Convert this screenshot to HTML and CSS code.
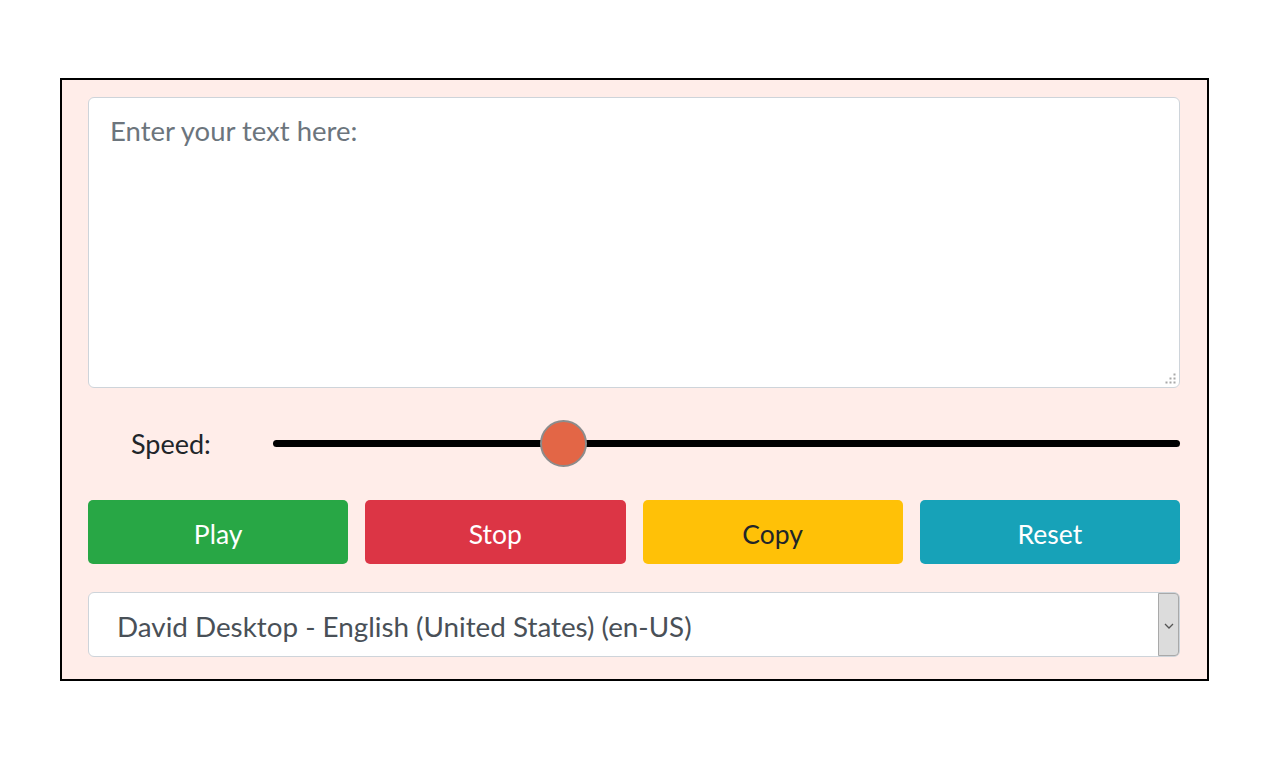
FILE: index.html
```html
<!DOCTYPE html>
<html lang="en">
<head>
<meta charset="utf-8">
<title>Text to Speech</title>
<link rel="stylesheet" href="styles.css">
</head>
<body>
<div class="panel">
  <div class="text-wrap">
    <textarea class="text-input" placeholder="Enter your text here:"></textarea>
    <svg class="grip" width="11" height="11" viewBox="0 0 11 11">
      <g fill="#a8a8a8">
        <rect x="8.5" y="0.5" width="2" height="2"/>
        <rect x="4.5" y="4.5" width="2" height="2"/>
        <rect x="8.5" y="4.5" width="2" height="2"/>
        <rect x="0.5" y="8.5" width="2" height="2"/>
        <rect x="4.5" y="8.5" width="2" height="2"/>
        <rect x="8.5" y="8.5" width="2" height="2"/>
      </g>
    </svg>
  </div>
  <div class="speed-row">
    <label class="speed-label" for="speed">Speed:</label>
    <input class="speed-range" id="speed" type="range" min="0.1" max="3" step="0.1" value="1">
  </div>
  <div class="buttons">
    <button class="btn btn-play">Play</button>
    <button class="btn btn-stop">Stop</button>
    <button class="btn btn-copy">Copy</button>
    <button class="btn btn-reset">Reset</button>
  </div>
  <div class="select-wrap">
    <select class="voice-select">
      <option>David Desktop - English (United States) (en-US)</option>
    </select>
    <span class="select-arrow"><svg width="10" height="6" viewBox="0 0 10 6"><path d="M1 1 L5 5 L9 1" fill="none" stroke="#555" stroke-width="1.3"/></svg></span>
  </div>
</div>
</body>
</html>
```

FILE: styles.css
```css
html, body {
  margin: 0;
  padding: 0;
  background: #ffffff;
}
body {
  font-family: "Lato", "Open Sans", sans-serif;
  color: #212529;
}
.panel {
  box-sizing: border-box;
  width: 1149px;
  margin: 78px 0 0 60px;
  border: 2px solid #000;
  background: #ffede9;
  padding: 17px 27px 22px 26px;
  display: flex;
  flex-direction: column;
}
.text-wrap {
  position: relative;
}
.text-input {
  box-sizing: border-box;
  display: block;
  width: 100%;
  height: 291px;
  border: 1px solid #ced4da;
  border-radius: 6px;
  background: #fff;
  padding: 12px 21px;
  font-family: inherit;
  font-size: 27.5px;
  line-height: 1.5;
  color: #495057;
  resize: none;
  outline: none;
}
.text-input::placeholder {
  color: #6c757d;
  opacity: 1;
}
.grip {
  position: absolute;
  right: 4px;
  bottom: 4px;
}
.speed-row {
  display: flex;
  align-items: center;
  margin-top: 32px;
  height: 47px;
}
.speed-label {
  width: 185px;
  padding-left: 43px;
  box-sizing: border-box;
  font-size: 27px;
  color: #212529;
  flex: none;
}
.speed-range {
  -webkit-appearance: none;
  appearance: none;
  flex: 1;
  margin: 0;
  height: 47px;
  background: transparent;
}
.speed-range::-webkit-slider-runnable-track {
  height: 7px;
  background: #000;
  border-radius: 4px;
}
.speed-range::-webkit-slider-thumb {
  -webkit-appearance: none;
  appearance: none;
  width: 47px;
  height: 47px;
  border-radius: 50%;
  background: #e36646;
  border: 2px solid #8c8c8c;
  box-sizing: border-box;
  margin-top: -20px;
}
.buttons {
  display: grid;
  grid-template-columns: repeat(4, 1fr);
  column-gap: 17px;
  margin-top: 33px;
}
.btn {
  height: 64px;
  border: none;
  border-radius: 5px;
  font-family: inherit;
  font-size: 26.5px;
  color: #fff;
  padding: 3px 0 0;
}
.btn-play { background: #28a745; }
.btn-stop { background: #dc3545; }
.btn-copy { background: #ffc107; color: #212529; }
.btn-reset { background: #17a2b8; }
.select-wrap {
  position: relative;
  margin-top: 28px;
}
.voice-select {
  -webkit-appearance: none;
  appearance: none;
  box-sizing: border-box;
  display: block;
  width: 100%;
  height: 65px;
  border: 1px solid #ced4da;
  border-radius: 6px;
  background: #fff;
  padding: 3px 30px 0 28px;
  font-family: inherit;
  font-size: 27.8px;
  color: #495057;
  outline: none;
}
.select-arrow {
  position: absolute;
  top: 1px;
  right: 1px;
  bottom: 1px;
  width: 21px;
  box-sizing: border-box;
  background: #dcdcdc;
  border: 1px solid #a9a9a9;
  border-radius: 0 4px 4px 0;
  display: flex;
  align-items: center;
  justify-content: center;
  padding-top: 2px;
}
```
